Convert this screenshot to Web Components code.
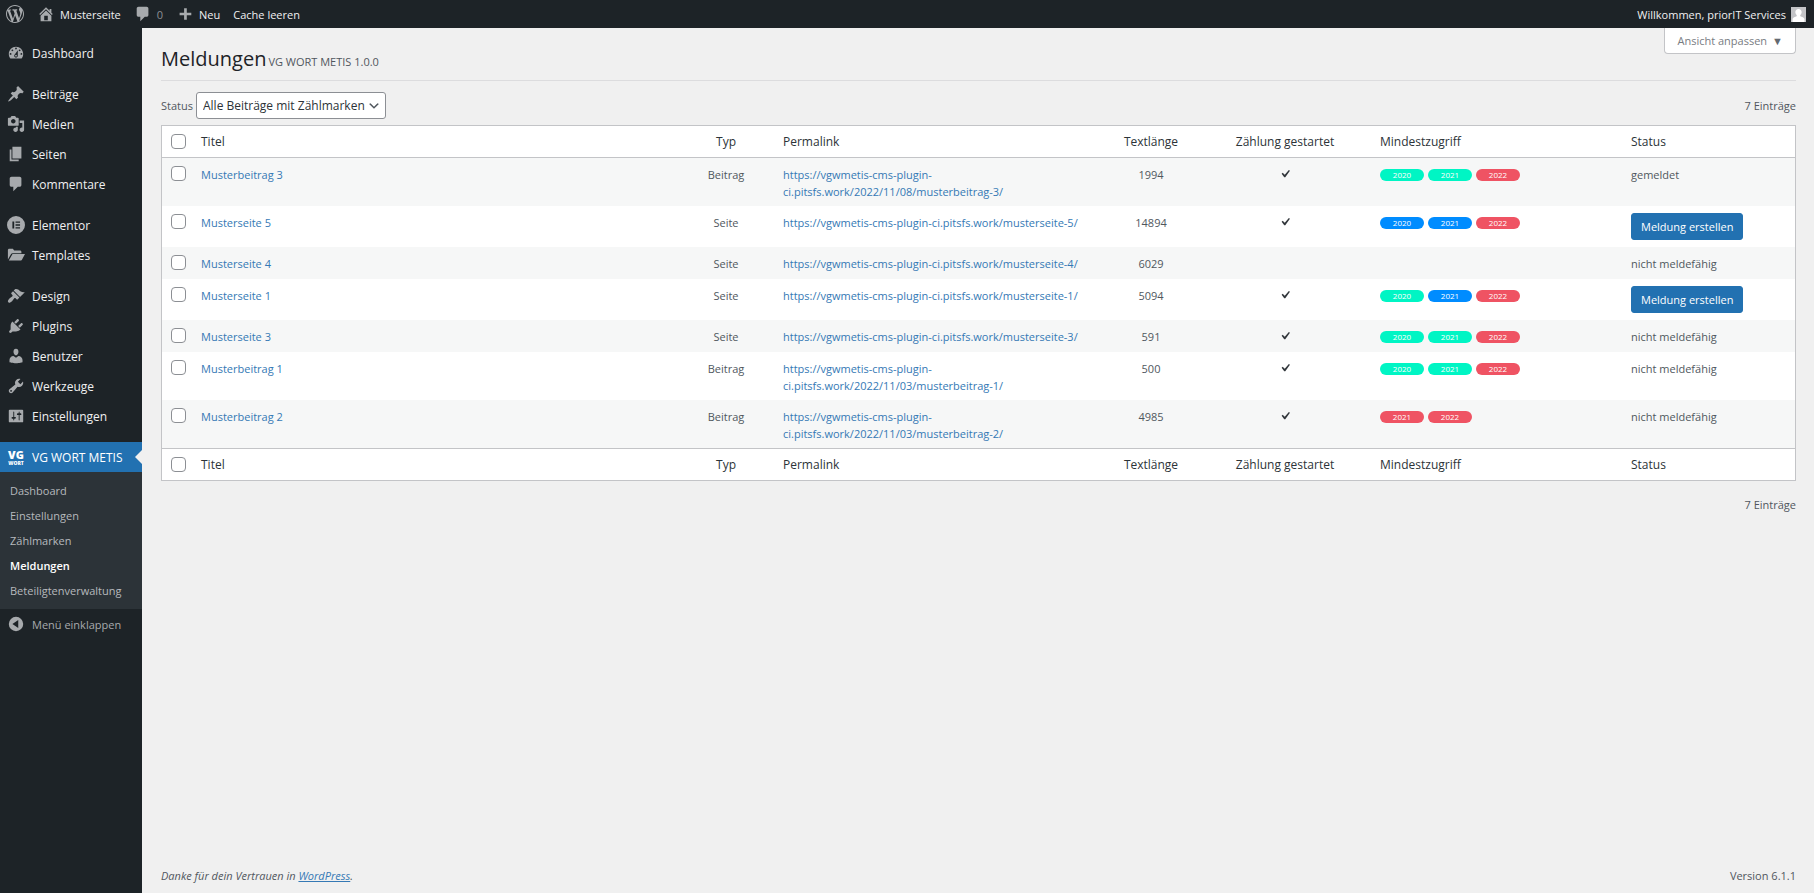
<!DOCTYPE html>
<html lang="de">
<head>
<meta charset="utf-8">
<title>Meldungen ‹ Musterseite — WordPress</title>
<style>
  body { margin: 0; background: #f0f0f0; color: #50575e; font: 11px/17px "Open Sans", "Noto Sans", sans-serif; }
</style>
</head>
<body>
<admin-page>
  <admin-bar slot="bar"></admin-bar>
  <admin-menu slot="menu"></admin-menu>
  <report-page>
    <report-table></report-table>
  </report-page>
</admin-page>

<script>
const ICONS = {
  wordpress: 'M20 10c0-5.51-4.49-10-10-10C4.48 0 0 4.49 0 10c0 5.52 4.48 10 10 10 5.51 0 10-4.48 10-10zM7.78 15.37L4.37 6.22c.55-.02 1.17-.08 1.17-.08.5-.06.44-1.13-.06-1.11 0 0-1.45.11-2.37.11-.18 0-.37 0-.58-.01C4.12 2.69 6.87 1.11 10 1.11c2.33 0 4.45.87 6.05 2.34-.68-.11-1.65.39-1.65 1.58 0 .74.45 1.36.9 2.1.35.61.55 1.36.55 2.46 0 1.49-1.4 5-1.4 5l-3.03-8.37c.54-.02.82-.17.82-.17.5-.05.44-1.25-.06-1.22 0 0-1.44.12-2.38.12-.87 0-2.33-.12-2.33-.12-.5-.03-.56 1.2-.06 1.22l.92.08 1.26 3.41zM17.41 10c.24-.64.74-1.87.43-4.25.7 1.29 1.05 2.71 1.05 4.25 0 3.29-1.73 6.24-4.4 7.78.97-2.59 1.94-5.2 2.92-7.78zM6.1 18.09C3.12 16.65 1.11 13.53 1.11 10c0-1.3.23-2.48.72-3.59C3.25 10.3 4.67 14.2 6.1 18.09zm4.03-6.63l2.58 6.98c-.86.29-1.76.45-2.71.45-.79 0-1.57-.11-2.29-.33.81-2.38 1.62-4.74 2.42-7.1z',
  home: 'M16 8.5l1.53 1.53-1.06 1.06L10 4.6l-6.47 6.49-1.06-1.06L10 2.5l4 4v-2h2v4zm-6-2.46l6 5.99V18H4v-5.97zM12 17v-5H8v5h4z',
  comments: 'M5 2h9c1.1 0 2 .9 2 2v7c0 1.1-.9 2-2 2h-2l-5 5v-5H5c-1.1 0-2-.9-2-2V4c0-1.1.9-2 2-2z',
  plus: 'M17 8.5v3h-5v5H9v-5H4v-3h5v-5h3v5h5z',
  dashboard: 'M3.76 16h12.48c1.1-1.37 1.76-3.11 1.76-5 0-4.42-3.58-8-8-8s-8 3.58-8 8c0 1.89.66 3.63 1.76 5zM10 4c.55 0 1 .45 1 1s-.45 1-1 1-1-.45-1-1 .45-1 1-1zM6 6c.55 0 1 .45 1 1s-.45 1-1 1-1-.45-1-1 .45-1 1-1zm8 0c.55 0 1 .45 1 1s-.45 1-1 1-1-.45-1-1 .45-1 1-1zm-5.37 5.55L12 7v6c0 1.1-.9 2-2 2s-2-.9-2-2c0-.57.24-1.08.63-1.45zM4 10c.55 0 1 .45 1 1s-.45 1-1 1-1-.45-1-1 .45-1 1-1zm12 0c.55 0 1 .45 1 1s-.45 1-1 1-1-.45-1-1 .45-1 1-1zm-5 3c0-.55-.45-1-1-1s-1 .45-1 1 .45 1 1 1 1-.45 1-1z',
  post: 'M10.44 3.02l1.82-1.82 6.36 6.35-1.83 1.82c-1.05-.68-2.48-.57-3.41.36l-.75.75c-.92.93-1.04 2.35-.35 3.41l-1.83 1.82-2.41-2.41-2.8 2.79c-.42.42-3.38 2.71-3.8 2.29s1.86-3.39 2.28-3.81l2.79-2.79L4.1 9.36l1.83-1.82c1.05.69 2.48.57 3.4-.36l.75-.75c.93-.92 1.05-2.35.36-3.41z',
  media: 'M13 11V4c0-.55-.45-1-1-1h-1.67L9 1H5L3.67 3H2c-.55 0-1 .45-1 1v7c0 .55.45 1 1 1h10c.55 0 1-.45 1-1zM7 4.5c1.38 0 2.5 1.12 2.5 2.5S8.38 9.5 7 9.5 4.5 8.38 4.5 7 5.62 4.5 7 4.5zM14 6h5v10.5c0 1.38-1.12 2.5-2.5 2.5S14 17.88 14 16.5s1.12-2.5 2.5-2.5c.17 0 .34.02.5.05V9h-3V6zm-4 8.05V13h2v3.5c0 1.38-1.12 2.5-2.5 2.5S7 17.88 7 16.5 8.12 14 9.5 14c.17 0 .34.02.5.05z',
  page: 'M6 15V2h10v13H6zm-1 1h8v2H3V5h2v11z',
  elementor: 'M10 0a10 10 0 1 0 0 20 10 10 0 0 0 0-20zM6 6h2v8H6zm3.500 0h5v1.600h-5zm0 3.200h5v1.600h-5zm0 3.200h5V14h-5z',
  folder: 'M1 4.500C1 3.700 1.700 3 2.500 3h4L8 5h6.500c.8 0 1.500.7 1.500 1.500V8H6.200c-.8 0-1.400.4-1.800 1.100L1 15zm4.800 4.900c.2-.3.500-.4.900-.4H20l-3.400 6.300c-.2.400-.6.700-1.100.7H2z',
  appearance: 'M14.48 11.06L7.41 3.99l1.5-1.5c.5-.56 2.3-.47 3.51.32 1.21.8 1.43 1.28 2.91 2.1 1.18.64 2.45 1.26 4.45.85zm-.71.71L6.7 4.7 4.93 6.47c-.39.39-.39 1.02 0 1.41l1.06 1.06c.39.39.39 1.03 0 1.42-.6.6-1.43 1.11-2.21 1.69-.35.26-.7.53-1.01.84C1.43 14.23.4 16.08 1.4 17.07c.99 1 2.84-.03 4.18-1.36.31-.31.58-.66.85-1.02.57-.78 1.08-1.61 1.69-2.21.39-.39 1.02-.39 1.41 0l1.06 1.06c.39.39 1.02.39 1.41 0z',
  plugins: 'M13.11 4.36L9.87 7.6 8 5.73l3.24-3.24c.35-.34 1.05-.2 1.56.32.52.51.66 1.21.31 1.55zm-8 1.77l.91-1.12 9.01 9.01-1.19.84c-.71.71-2.63 1.16-3.82 1.16H6.14L4.9 17.26c-.59.59-1.54.59-2.12 0-.59-.58-.59-1.53 0-2.12l1.24-1.24v-3.88c0-1.13.4-3.19 1.09-3.89zm7.26 3.97l3.24-3.24c.34-.35 1.04-.21 1.55.31.52.51.66 1.21.31 1.55l-3.24 3.25z',
  users: 'M10 9.25c-2.27 0-2.73-3.44-2.73-3.44C7 4.02 7.82 2 9.97 2c2.16 0 2.98 2.02 2.71 3.81 0 0-.41 3.44-2.68 3.44zm0 2.57L12.72 10c2.39 0 4.52 2.33 4.52 4.53v2.49s-3.65 1.13-7.24 1.13c-3.65 0-7.24-1.13-7.24-1.13v-2.49c0-2.25 1.94-4.48 4.47-4.48z',
  tools: 'M16.68 9.77c-1.34 1.34-3.3 1.67-4.95.99l-5.41 6.52c-.99.99-2.59.99-3.58 0s-.99-2.59 0-3.57l6.52-5.42c-.68-1.65-.35-3.61.99-4.95 1.28-1.28 3.12-1.62 4.72-1.06l-2.89 2.89 2.82 2.82 2.86-2.87c.53 1.58.18 3.39-1.08 4.65zM3.81 16.21c.4.39 1.04.39 1.43 0 .4-.4.4-1.04 0-1.43-.39-.4-1.03-.4-1.43 0-.39.39-.39 1.03 0 1.43z',
  settings: 'M18 16V4c0-.55-.45-1-1-1H3c-.55 0-1 .45-1 1v12c0 .55.45 1 1 1h14c.55 0 1-.45 1-1zM8 11h1c.55 0 1 .45 1 1s-.45 1-1 1H8v1.5c0 .28-.22.5-.5.5s-.5-.22-.5-.5V13H6c-.55 0-1-.45-1-1s.45-1 1-1h1V5.5c0-.28.22-.5.5-.5s.5.22.5.5V11zm5-2h-1c-.55 0-1-.45-1-1s.45-1 1-1h1V5.5c0-.28.22-.5.5-.5s.5.22.5.5V7h1c.55 0 1 .45 1 1s-.45 1-1 1h-1v5.5c0 .28-.22.5-.5.5s-.5-.22-.5-.5V9z',
  collapse: 'M10 2a8 8 0 1 0 0 16 8 8 0 0 0 0-16zm2.500 3.500v9L6 10z',
  yes: 'M14.83 4.89l1.34.94-5.81 8.38H9.02L5.78 9.67l1.34-1.25 2.57 2.4z',
  chevron: 'M5 6l5 5 5-5 2 1-7 7-7-7 2-1z',
  avatar: 'M10 2.500c2.600 0 4.200 1.900 4.200 4.300 0 1.700-.8 3.300-1.900 4.100v1.200c.4 1 4.700 1.200 5.700 4.100V20H2v-3.800c1-2.900 5.300-3.100 5.700-4.100v-1.200C6.600 10.100 5.800 8.500 5.800 6.800c0-2.400 1.600-4.300 4.200-4.300z'
};

// Base class: renders the markup of the subclass into an open shadow root.
class ShadowElement extends HTMLElement {
  constructor() {
    super();
    this.attachShadow({ mode: 'open' });
  }
  connectedCallback() {
    this.shadowRoot.innerHTML = this.render();
  }
}

customElements.define('dash-icon', class extends ShadowElement {
  render() {
    return `<style>
      :host { display: block; flex: none; width: 18px; height: 18px; }
      svg { display: block; width: 100%; height: 100%; fill: currentColor; fill-rule: evenodd; }
    </style>
    <svg viewBox="0 0 20 20" aria-hidden="true"><path d="${ICONS[this.getAttribute('name')]}"/></svg>`;
  }
});

customElements.define('admin-page', class extends ShadowElement {
  render() {
    return `<style>
      :host { display: grid; grid-template: auto 1fr / 142px 1fr; min-height: 100vh; }
      .bar { grid-column: 1 / -1; }
      .menu { background: #1d2327; }
      .content { display: grid; min-width: 0; }
    </style>
    <header class="bar"><slot name="bar"></slot></header>
    <div class="menu"><slot name="menu"></slot></div>
    <main class="content"><slot></slot></main>`;
  }
});

customElements.define('admin-bar', class extends ShadowElement {
  render() {
    return `<style>
      :host { display: block; background: #1d2327; color: #f0f0f1; }
      nav { display: flex; align-items: center; height: 28px; padding: 0 8px 0 6px; }
      a { display: flex; align-items: center; gap: 5px; color: inherit; text-decoration: none; }
      dash-icon { color: #a7aaad; }
      a + a { margin-left: 13px; }
      .comments { color: #8c8f94; }
      a.me { margin-left: auto; }
      .me dash-icon { width: 15px; height: 15px; background: #c3c4c7; color: #fff; }
    </style>
    <nav>
      <a href="#" aria-label="Über WordPress"><dash-icon name="wordpress"></dash-icon></a>
      <a href="#"><dash-icon name="home"></dash-icon>Musterseite</a>
      <a class="comments" href="#"><dash-icon name="comments"></dash-icon>0</a>
      <a href="#"><dash-icon name="plus"></dash-icon>Neu</a>
      <a href="#">Cache leeren</a>
      <a class="me" href="#">Willkommen, priorIT Services<dash-icon name="avatar"></dash-icon></a>
    </nav>`;
  }
});

customElements.define('menu-item', class extends ShadowElement {
  render() {
    return `<style>
      :host { display: block; }
      :host([first]) { margin-top: 11px; }
      a { display: flex; align-items: center; gap: 7px; height: 30px; padding-left: 7px;
          color: #f0f0f1; font-size: 12px; text-decoration: none; white-space: nowrap; }
      dash-icon { color: #a7aaad; }
      :host([current]) a { background: #2271b1; color: #fff; position: relative; }
      :host([current]) a::after { content: ""; position: absolute; right: 0; top: 8px;
          border: 7px solid transparent; border-left-width: 0; border-right-color: #f0f0f0; }
    </style>
    <a href="#">${this.hasAttribute('icon') ? `<dash-icon name="${this.getAttribute('icon')}"></dash-icon>` : '<slot name="icon"></slot>'}<span><slot></slot></span></a>`;
  }
});

customElements.define('vg-wort-logo', class extends ShadowElement {
  render() {
    return `<style>
      :host { display: block; flex: none; width: 18px; height: 24px; }
      svg { display: block; overflow: visible; fill: #fff; font-family: "Open Sans", sans-serif; font-weight: 800; text-anchor: middle; }
    </style>
    <svg width="18" height="24" viewBox="0 0 18 24" aria-hidden="true">
      <text x="9" y="14" font-size="11">VG</text>
      <text x="9" y="20" font-size="5">WORT</text>
    </svg>`;
  }
});

customElements.define('admin-menu', class extends ShadowElement {
  render() {
    return `<style>
      :host { display: block; padding-top: 10px; }
      ul { margin: 0; padding: 6px 0; list-style: none; background: #2c3338; }
      li a { display: block; padding: 4px 10px; color: #b6b9bd; text-decoration: none; }
      li a[aria-current] { color: #fff; font-weight: 600; }
      button { display: flex; align-items: center; gap: 7px; width: 100%; height: 30px; padding: 0 0 0 7px;
               border: 0; background: none; color: #a7aaad; font: inherit; }
    </style>
    <nav aria-label="Hauptmenü">
      <menu-item icon="dashboard">Dashboard</menu-item>
      <menu-item icon="post" first>Beiträge</menu-item>
      <menu-item icon="media">Medien</menu-item>
      <menu-item icon="page">Seiten</menu-item>
      <menu-item icon="comments">Kommentare</menu-item>
      <menu-item icon="elementor" first>Elementor</menu-item>
      <menu-item icon="folder">Templates</menu-item>
      <menu-item icon="appearance" first>Design</menu-item>
      <menu-item icon="plugins">Plugins</menu-item>
      <menu-item icon="users">Benutzer</menu-item>
      <menu-item icon="tools">Werkzeuge</menu-item>
      <menu-item icon="settings">Einstellungen</menu-item>
      <menu-item first current><vg-wort-logo slot="icon"></vg-wort-logo>VG WORT METIS</menu-item>
      <ul>
        <li><a href="#">Dashboard</a></li>
        <li><a href="#">Einstellungen</a></li>
        <li><a href="#">Zählmarken</a></li>
        <li><a href="#" aria-current="page">Meldungen</a></li>
        <li><a href="#">Beteiligtenverwaltung</a></li>
      </ul>
      <button type="button"><dash-icon name="collapse"></dash-icon>Menü einklappen</button>
    </nav>`;
  }
});

customElements.define('report-page', class extends ShadowElement {
  render() {
    return `<style>
      :host { display: flex; flex-direction: column; min-width: 0; padding: 0 18px 0 19px; }
      .top { display: flex; align-items: flex-start; justify-content: space-between; height: 52px; border-bottom: 1px solid #dcdcde; }
      h1 { display: flex; align-items: baseline; gap: 2px; margin: 0; padding-top: 18px; color: #1d2327;
           font-size: 20px; line-height: 26px; font-weight: 400; }
      h1 small { color: #50575e; font-size: 11px; }
      .screen { display: flex; align-items: center; gap: 5px; height: 26px; padding: 0 12px; border: 1px solid #c3c4c7;
                border-top: 0; border-radius: 0 0 4px 4px; background: #fff; color: #787c82; font: inherit; }
      .screen span { color: #646970; }
      .filter { display: flex; align-items: center; gap: 3px; padding: 11px 0 6px; }
      .select { display: grid; align-items: center; }
      select { grid-area: 1 / 1; appearance: none; height: 27px; margin: 0; padding: 0 20px 0 6px; border: 1px solid #8c8f94;
               border-radius: 3px; background: #fff; color: #2c3338; font: inherit; font-size: 12px; }
      .select dash-icon { grid-area: 1 / 1; justify-self: end; width: 14px; height: 14px; margin-right: 5px; color: #50575e; pointer-events: none; }
      .count { margin-left: auto; }
      .below { padding-top: 15px; text-align: right; }
      footer { display: flex; justify-content: space-between; margin-top: auto; padding-bottom: 9px; }
      footer a { color: #3579b5; }
    </style>
    <div class="top">
      <h1>Meldungen <small>VG WORT METIS 1.0.0</small></h1>
      <button class="screen" type="button">Ansicht anpassen <span>▼</span></button>
    </div>
    <div class="filter">
      <label for="status">Status</label>
      <div class="select">
        <select id="status"><option>Alle Beiträge mit Zählmarken</option></select>
        <dash-icon name="chevron"></dash-icon>
      </div>
      <span class="count">7 Einträge</span>
    </div>
    <slot></slot>
    <div class="below">7 Einträge</div>
    <footer>
      <em>Danke für dein Vertrauen in <a href="#">WordPress</a>.</em>
      <span>Version 6.1.1</span>
    </footer>`;
  }
});

customElements.define('year-pill', class extends ShadowElement {
  render() {
    return `<style>
      :host { display: block; width: 44px; border-radius: 6px; background: var(--pill); color: #fff;
              font-size: 8px; line-height: 12px; text-align: center; }
      :host([state="full"]) { --pill: #00f5c4; }
      :host([state="partial"]) { --pill: #008cff; }
      :host([state="none"]) { --pill: #ef5363; }
    </style><slot></slot>`;
  }
});

const ROWS = [
  ['Musterbeitrag 3', 'Beitrag', '2022/11/08/musterbeitrag-3', 1994, true, [[2020, 'full'], [2021, 'full'], [2022, 'none']], 'gemeldet'],
  ['Musterseite 5', 'Seite', 'musterseite-5', 14894, true, [[2020, 'partial'], [2021, 'partial'], [2022, 'none']], null],
  ['Musterseite 4', 'Seite', 'musterseite-4', 6029, false, [], 'nicht meldefähig'],
  ['Musterseite 1', 'Seite', 'musterseite-1', 5094, true, [[2020, 'full'], [2021, 'partial'], [2022, 'none']], null],
  ['Musterseite 3', 'Seite', 'musterseite-3', 591, true, [[2020, 'full'], [2021, 'full'], [2022, 'none']], 'nicht meldefähig'],
  ['Musterbeitrag 1', 'Beitrag', '2022/11/03/musterbeitrag-1', 500, true, [[2020, 'full'], [2021, 'full'], [2022, 'none']], 'nicht meldefähig'],
  ['Musterbeitrag 2', 'Beitrag', '2022/11/03/musterbeitrag-2', 4985, true, [[2021, 'none'], [2022, 'none']], 'nicht meldefähig']
];

customElements.define('report-table', class extends ShadowElement {
  heading() {
    return `<tr>
      <th class="check"><input type="checkbox" aria-label="Alle auswählen"></th>
      <th>Titel</th><th class="mid">Typ</th><th>Permalink</th><th class="mid">Textlänge</th>
      <th class="mid">Zählung gestartet</th><th>Mindestzugriff</th><th>Status</th>
    </tr>`;
  }
  row([title, type, path, length, counting, years, status]) {
    return `<tr>
      <td class="check"><input type="checkbox" aria-label="${title} auswählen"></td>
      <td><a href="#">${title}</a></td>
      <td class="mid">${type}</td>
      <td><a href="#">https://vgwmetis-cms-plugin-ci.pitsfs.work/${path}/</a></td>
      <td class="mid">${length}</td>
      <td class="mid">${counting ? '<dash-icon name="yes"></dash-icon>' : ''}</td>
      <td><div class="years">${years.map(([y, s]) => `<year-pill state="${s}">${y}</year-pill>`).join('')}</div></td>
      <td${status ? `>${status}` : ' class="action"><button type="button">Meldung erstellen</button>'}</td>
    </tr>`;
  }
  render() {
    return `<style>
      :host { display: block; }
      table { width: 100%; table-layout: fixed; border: 1px solid #c3c4c7; border-spacing: 0; background: #fff; }
      .c-check { width: 30px; } .c-type { width: 96px; } .c-link { width: 329px; } .c-length { width: 96px; }
      .c-count { width: 172px; } .c-years { width: 251px; } .c-status { width: 173px; }
      th { height: 31px; padding: 0 9px; color: #2c3338; font-size: 12px; font-weight: 400; text-align: left; }
      thead th { border-bottom: 1px solid #c3c4c7; }
      tfoot th { border-top: 1px solid #c3c4c7; }
      td { padding: 8px 9px 6px; vertical-align: top; }
      tbody tr { height: 32px; }
      tbody tr:nth-child(odd) { background: #f6f7f7; }
      .mid { text-align: center; }
      .check { padding-right: 0; }
      input { display: block; appearance: none; box-sizing: border-box; width: 15px; height: 15px; margin: 0;
              border: 1px solid #8c8f94; border-radius: 4px; background: #fff; }
      a { color: #3579b5; text-decoration: none; }
      dash-icon { width: 18px; height: 16px; margin: 0 auto; color: #32373c; }
      .years { display: flex; gap: 4px; padding-top: 3px; }
      .action { padding-top: 7px; padding-bottom: 7px; }
      button { display: block; height: 27px; padding: 0 9px; border: 1px solid #2271b1; border-radius: 3px;
               background: #2271b1; color: #fff; font: inherit; }
    </style>
    <table>
      <colgroup><col class="c-check"><col><col class="c-type"><col class="c-link"><col class="c-length">
        <col class="c-count"><col class="c-years"><col class="c-status"></colgroup>
      <thead>${this.heading()}</thead>
      <tbody>${ROWS.map(r => this.row(r)).join('')}</tbody>
      <tfoot>${this.heading()}</tfoot>
    </table>`;
  }
});
</script>
</body>
</html>
